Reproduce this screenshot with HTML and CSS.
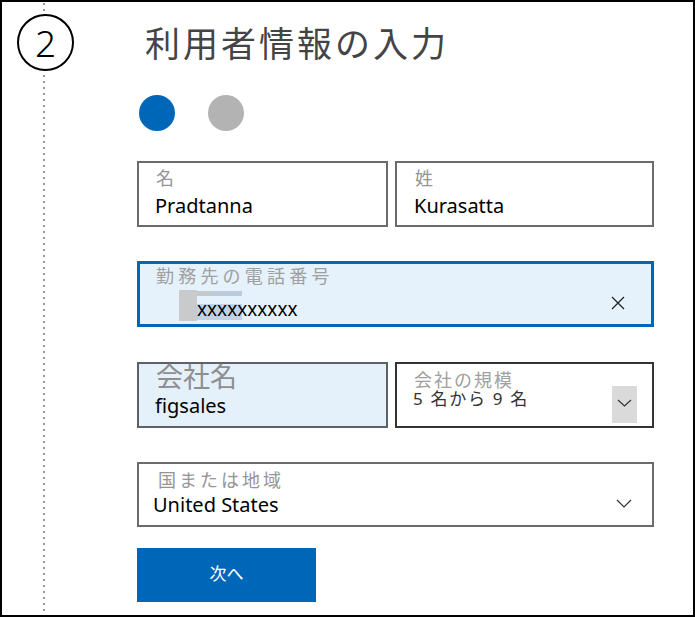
FILE: index.html
```html
<!DOCTYPE html>
<html lang="ja">
<head>
<meta charset="utf-8">
<title>利用者情報の入力</title>
<link rel="stylesheet" href="styles.css">
</head>
<body>
<div class="frame">
  <div class="rail">
    <div class="step">2</div>
  </div>
  <main class="content">
    <h1 class="title">利用者情報の入力</h1>
    <div class="pager"><span class="pager-dot is-active"></span><span class="pager-dot"></span></div>

    <div class="row row-name">
      <div class="field">
        <div class="field-label">名</div>
        <div class="field-value">Pradtanna</div>
      </div>
      <div class="field field-last">
        <div class="field-label">姓</div>
        <div class="field-value">Kurasatta</div>
      </div>
    </div>

    <div class="field field-phone">
      <div class="field-main">
        <div class="field-label label-spaced label-phone">勤務先の電話番号</div>
        <div class="phone-line"><span class="sel-block"></span><span class="phone-text">xxxxxxxxxx</span></div>
      </div>
      <svg class="clear-icon" width="14" height="14" viewBox="0 0 14 14" aria-hidden="true"><path d="M1 1 L13 13 M13 1 L1 13" stroke="#222" stroke-width="1.3" fill="none"/></svg>
    </div>

    <div class="row row-company">
      <div class="field field-company">
        <div class="field-label label-large">会社名</div>
        <div class="field-value">figsales</div>
      </div>
      <div class="field field-size">
        <div class="field-main">
          <div class="field-label label-size">会社の規模</div>
          <div class="field-value value-size">5 名から 9 名</div>
        </div>
        <span class="dd-btn"><svg width="15" height="8" viewBox="0 0 15 8" aria-hidden="true"><path d="M1 1 L7.5 7 L14 1" stroke="#333" stroke-width="1.2" fill="none"/></svg></span>
      </div>
    </div>

    <div class="field field-country">
      <div class="field-main">
        <div class="field-label label-spaced label-country">国または地域</div>
        <div class="field-value value-country">United States</div>
      </div>
      <svg class="chevron" width="16" height="9" viewBox="0 0 16 9" aria-hidden="true"><path d="M1 1 L8 8 L15 1" stroke="#333" stroke-width="1.2" fill="none"/></svg>
    </div>

    <button class="next-btn" type="button">次へ</button>
  </main>
</div>
</body>
</html>
```

FILE: styles.css
```css
* { box-sizing: border-box; }
html, body { margin: 0; padding: 0; background: #fff; }
body { font-family: "Noto Sans", "Noto Sans CJK JP", sans-serif; color: #000; }

.frame {
  width: 695px;
  height: 617px;
  border: 2px solid #000;
  display: flex;
  overflow: hidden;
  background: #fff;
}

.rail {
  flex: 0 0 135px;
  padding: 12px 0 0 15px;
  background-image: linear-gradient(to bottom, #9a9a9a 0, #9a9a9a 2px, transparent 2px);
  background-size: 2px 6px;
  background-repeat: repeat-y;
  background-position: 41px 1px;
}

.step {
  width: 57px;
  height: 57px;
  border: 2px solid #000;
  border-radius: 50%;
  background: #fff;
  display: flex;
  align-items: center;
  justify-content: center;
  font-family: "Noto Sans", sans-serif;
  font-size: 37px;
  font-weight: 300;
  line-height: 1;
  color: #000;
}

.content {
  width: 517px;
  display: flex;
  flex-direction: column;
  align-items: flex-start;
}

.title {
  margin: 18px 0 0 8px;
  font-family: "Noto Sans CJK JP", sans-serif;
  font-size: 35px;
  line-height: 44px;
  font-weight: 400;
  letter-spacing: 3px;
  color: #444;
}

.pager {
  display: flex;
  gap: 33px;
  margin: 31px 0 0 2px;
}
.pager-dot {
  width: 36px;
  height: 36px;
  border-radius: 50%;
  background: #b3b3b3;
}
.pager-dot.is-active { background: #0067b8; }

.row {
  display: grid;
  grid-template-columns: 251px 259px;
  column-gap: 7px;
  width: 517px;
}
.row-name { margin-top: 30px; }
.row-company { margin-top: 35px; }

.field {
  height: 66px;
  border: 2px solid #6b6b6b;
  padding: 3px 16px 0 16px;
  background: #fff;
}
.field-last { padding-left: 17px; }

.field-label {
  font-family: "Noto Sans CJK JP", sans-serif;
  font-size: 18px;
  line-height: 22px;
  color: #959595;
  margin-left: 1px;
}
.field-value {
  font-family: "Noto Sans", "Noto Sans CJK JP", sans-serif;
  font-size: 20px;
  line-height: 36px;
  color: #000;
}

.field-main { flex: 1; }

/* phone */
.field-phone {
  width: 517px;
  margin-top: 34px;
  border: 3px solid #0067b8;
  background: #e5f1fb;
  padding: 0 0 0 15px;
  display: flex;
}
.label-spaced { letter-spacing: 3px; color: #a0a0a0; }
.label-phone { letter-spacing: 4.2px; }
.phone-line {
  display: flex;
  height: 31px;
  margin: 4px 0 0 24px;
}
.sel-block {
  width: 18px;
  height: 31px;
  background: #c8cacc;
}
.phone-text {
  display: block;
  height: 31px;
  font-size: 19px;
  line-height: 38px;
  color: #000;
  background-image:
    linear-gradient(#c6c9cc, #c6c9cc),
    linear-gradient(#bccbdb, #bccbdb),
    linear-gradient(#c2d2e4, #c2d2e4);
  background-size: 14px 5px, 31px 5px, 45px 16px;
  background-position: 0 1px, 14px 1px, 0 14px;
  background-repeat: no-repeat;
}
.clear-icon {
  align-self: flex-end;
  margin: 0 26px 14px 0;
  flex: none;
}

/* company */
.field-company {
  background: #e4f0fa;
  border-color: #5d6268;
  padding-top: 0;
}
.label-large {
  font-size: 27px;
  line-height: 24px;
  color: #8e8e8e;
  margin-left: 1px;
}

.field-size {
  border-color: #333;
  padding: 4px 0 0 16px;
  display: flex;
}
.label-size { letter-spacing: 2px; color: #a0a0a0; }
.value-size {
  font-size: 17px;
  line-height: 18px;
  letter-spacing: 1.7px;
  color: #333;
}
.dd-btn {
  flex: none;
  align-self: flex-end;
  width: 25px;
  height: 37px;
  margin: 0 15px 3px 0;
  background: #dadada;
  display: flex;
  justify-content: center;
  align-items: flex-start;
  padding-top: 13px;
}

/* country */
.field-country {
  width: 517px;
  height: 65px;
  margin-top: 34px;
  padding: 4px 0 0 14px;
  display: flex;
}
.label-country { margin-left: 5px; color: #959595; }
.value-country { line-height: 29px; }
.chevron {
  flex: none;
  align-self: flex-end;
  margin: 0 20px 17px 0;
}

.next-btn {
  margin-top: 21px;
  width: 179px;
  height: 54px;
  border: none;
  background: #0067b8;
  color: #fff;
  font-family: "Noto Sans CJK JP", sans-serif;
  font-size: 17px;
  line-height: 20px;
  padding: 0 0 4px 0;
  cursor: pointer;
}
```
